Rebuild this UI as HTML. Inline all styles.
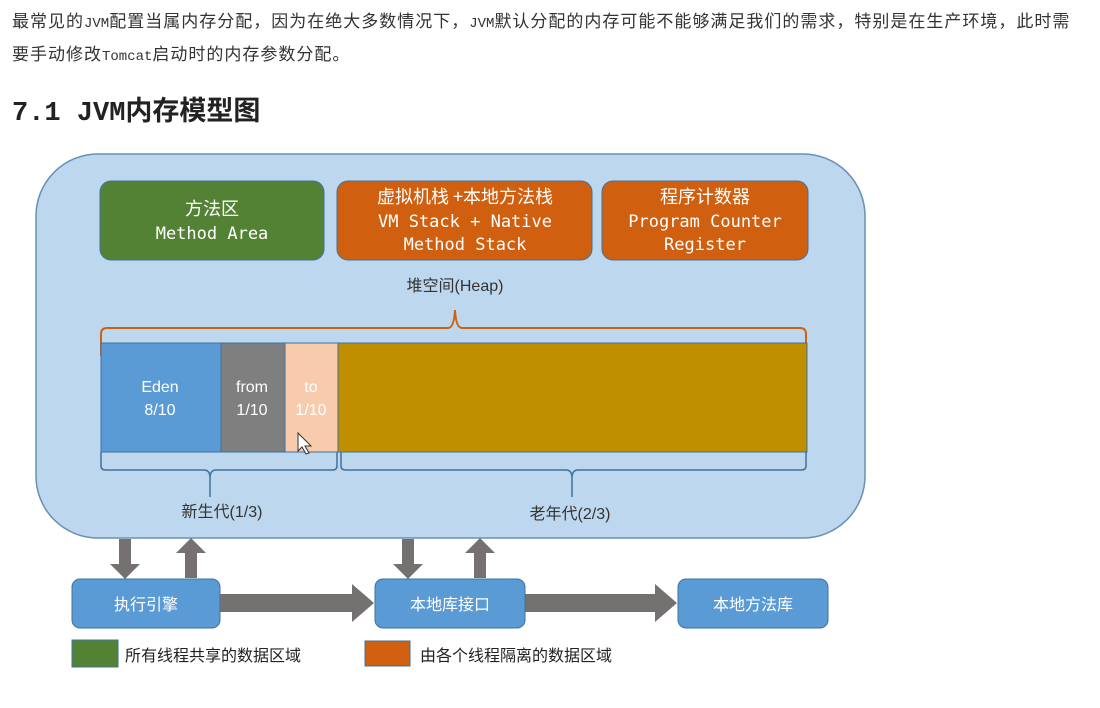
<!DOCTYPE html>
<html><head><meta charset="utf-8"><style>
html,body{margin:0;padding:0;background:#fff;width:1100px;height:708px;overflow:hidden}
body{position:relative;font-family:"Liberation Sans","Noto Sans CJK SC",sans-serif;color:#333}
.p{position:absolute;left:12px;font-size:17px;letter-spacing:1px;line-height:20px;white-space:nowrap}
.m{font-family:"Liberation Mono","Noto Sans CJK SC",monospace;font-size:14px;letter-spacing:0}
h2{position:absolute;left:12px;top:92px;margin:0;font-size:27px;line-height:34px;font-weight:bold;color:#222;font-family:"Liberation Mono","Noto Sans CJK SC",monospace}
</style></head><body>
<div class="p" style="top:12px">最常见的<span class="m">JVM</span>配置当属内存分配，因为在绝大多数情况下，<span class="m">JVM</span>默认分配的内存可能不能够满足我们的需求，特别是在生产环境，此时需</div>
<div class="p" style="top:45px">要手动修改<span class="m">Tomcat</span>启动时的内存参数分配。</div>
<h2>7.1 JVM<span style="font-family:'Noto Sans CJK SC',sans-serif">内存模型图</span></h2>
<svg width="1100" height="708" style="position:absolute;left:0;top:0" xmlns="http://www.w3.org/2000/svg">
<defs><style>
.c{font-family:"Noto Sans CJK SC",sans-serif;fill:#fff;font-size:18px}
.mo{font-family:"DejaVu Sans Mono","Noto Sans CJK SC",monospace;fill:#fff;font-size:17px}
.s{font-family:"Liberation Sans","Noto Sans CJK SC",sans-serif;font-size:16px}
</style></defs>
<rect x="36" y="154" width="829" height="384" rx="62" fill="#bdd7ee" stroke="#6a8fb5" stroke-width="1.5"/>
<rect x="100" y="181" width="224" height="79" rx="11" fill="#548235" stroke="#41719c"/>
<rect x="337" y="181" width="255" height="79" rx="11" fill="#d06010" stroke="#41719c"/>
<rect x="602" y="181" width="206" height="79" rx="11" fill="#d06010" stroke="#41719c"/>
<text class="c" x="212" y="215" text-anchor="middle">方法区</text>
<text class="mo" x="212" y="239" text-anchor="middle">Method Area</text>
<text class="c" x="465" y="203" text-anchor="middle">虚拟机栈 +本地方法栈</text>
<text class="mo" x="465" y="227" text-anchor="middle">VM Stack + Native</text>
<text class="mo" x="465" y="250" text-anchor="middle">Method Stack</text>
<text class="c" x="705" y="203" text-anchor="middle">程序计数器</text>
<text class="mo" x="705" y="227" text-anchor="middle">Program Counter</text>
<text class="mo" x="705" y="250" text-anchor="middle">Register</text>
<text class="s" x="455" y="291" text-anchor="middle" fill="#333">堆空间(Heap)</text>
<path d="M101,356 V334 Q101,328 107,328 H448 Q454,328 455,310 Q456,328 462,328 H800 Q806,328 806,334 V356" fill="none" stroke="#d06010" stroke-width="2"/>
<rect x="101" y="343" width="120" height="109" fill="#5b9bd5" stroke="#41719c"/>
<rect x="221" y="343" width="64" height="109" fill="#7f7f7f" stroke="#41719c"/>
<rect x="285" y="343" width="53" height="109" fill="#f8cbad" stroke="#41719c"/>
<rect x="338" y="343" width="469" height="109" fill="#bf8f00" stroke="#41719c"/>
<text class="s" x="160" y="392" text-anchor="middle" fill="#fff">Eden</text>
<text class="s" x="160" y="415" text-anchor="middle" fill="#fff">8/10</text>
<text class="s" x="252" y="392" text-anchor="middle" fill="#fff">from</text>
<text class="s" x="252" y="415" text-anchor="middle" fill="#fff">1/10</text>
<text class="s" x="311" y="392" text-anchor="middle" fill="#fff">to</text>
<text class="s" x="311" y="415" text-anchor="middle" fill="#fff">1/10</text>
<path d="M298,433 v18 l4,-4 l4,7 l3,-1 l-4,-7 h6 z" fill="#fff" stroke="#333"/>
<path d="M101,452 V466 Q101,470 106,470 H204 Q210,470 210,478 V497 M210,478 Q210,470 216,470 H332 Q337,470 337,466 V452" fill="none" stroke="#41719c" stroke-width="1.5"/>
<path d="M341,452 V466 Q341,470 346,470 H566 Q572,470 572,478 V497 M572,478 Q572,470 578,470 H801 Q806,470 806,466 V452" fill="none" stroke="#41719c" stroke-width="1.5"/>
<text class="s" x="222" y="517" text-anchor="middle" fill="#333">新生代(1/3)</text>
<text class="s" x="570" y="519" text-anchor="middle" fill="#333">老年代(2/3)</text>
<g fill="#767171">
<path d="M119,539 h12 v25 h9 l-15,15 l-15,-15 h9 z"/>
<path d="M185,578 h12 v-25 h9 l-15,-15 l-15,15 h9 z"/>
<path d="M402,539 h12 v25 h9 l-15,15 l-15,-15 h9 z"/>
<path d="M474,578 h12 v-25 h9 l-15,-15 l-15,15 h9 z"/>
<path d="M220,594 h132 v-10 l22,19 l-22,19 v-10 h-132 z"/>
<path d="M525,594 h130 v-10 l22,19 l-22,19 v-10 h-130 z"/>
</g>
<rect x="72" y="579" width="148" height="49" rx="8" fill="#5b9bd5" stroke="#41719c"/>
<rect x="375" y="579" width="150" height="49" rx="8" fill="#5b9bd5" stroke="#41719c"/>
<rect x="678" y="579" width="150" height="49" rx="8" fill="#5b9bd5" stroke="#41719c"/>
<text class="s" x="146" y="610" text-anchor="middle" fill="#fff">执行引擎</text>
<text class="s" x="450" y="610" text-anchor="middle" fill="#fff">本地库接口</text>
<text class="s" x="753" y="610" text-anchor="middle" fill="#fff">本地方法库</text>
<rect x="72" y="640" width="46" height="27" fill="#548235" stroke="#41719c"/>
<rect x="365" y="641" width="45" height="25" fill="#d06010" stroke="#41719c"/>
<text class="s" x="125" y="661" fill="#222" font-size="17">所有线程共享的数据区域</text>
<text class="s" x="420" y="661" fill="#222" font-size="17">由各个线程隔离的数据区域</text>
</svg>
</body></html>
